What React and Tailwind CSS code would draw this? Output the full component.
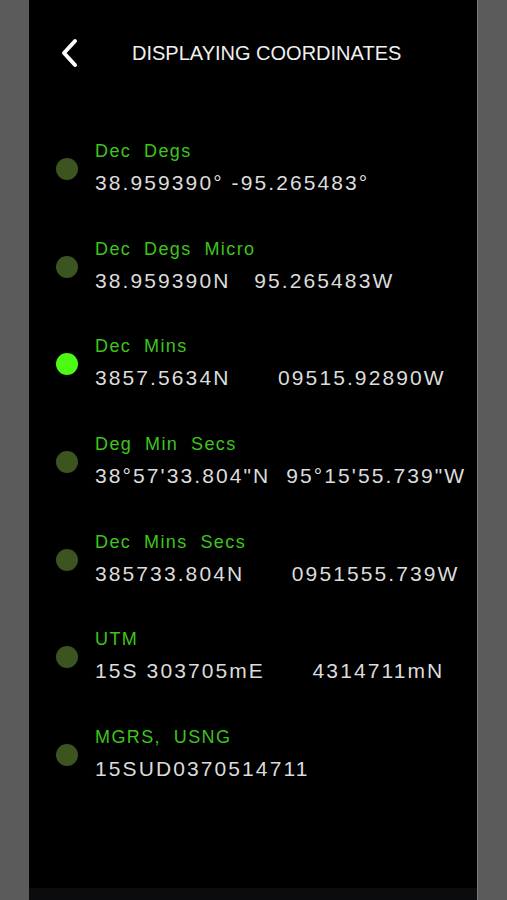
const formats = [
  { label: "Dec  Degs", value: "38.959390° -95.265483°" },
  { label: "Dec  Degs  Micro", value: "38.959390N   95.265483W" },
  { label: "Dec  Mins", value: "3857.5634N      09515.92890W", active: true },
  { label: "Deg  Min  Secs", value: "38°57'33.804\"N  95°15'55.739\"W" },
  { label: "Dec  Mins  Secs", value: "385733.804N      0951555.739W" },
  { label: "UTM", value: "15S 303705mE      4314711mN" },
  { label: "MGRS,  USNG", value: "15SUD0370514711" },
];

export default function App() {
  return (
    <div
      className="flex h-[900px] w-full justify-center bg-[#5b5b5b]"
      style={{ fontFamily: '"Liberation Sans", Arial, sans-serif' }}
    >
      <div className="flex w-[449px] flex-col bg-black border-r border-[#7a7a7a]">
        <div className="flex h-[106px] items-center">
          <svg
            className="ml-[31px] h-[30px] w-[19px]"
            viewBox="0 0 19 30"
            fill="none"
            stroke="white"
            strokeWidth="4"
            strokeLinecap="round"
            strokeLinejoin="round"
          >
            <path d="M15 3 L4 15 L15 27" />
          </svg>
          <h1 className="ml-[53px] text-[20px] leading-none text-[#f0f0f0]">
            DISPLAYING COORDINATES
          </h1>
        </div>

        <ul className="flex flex-1 flex-col gap-[39.67px] pt-[33px]">
          {formats.map((f) => (
            <li key={f.label} className="flex items-center">
              <span
                className={
                  "ml-[27px] mt-[2px] h-[22px] w-[22px] rounded-full " +
                  (f.active ? "bg-[#4cfa14]" : "bg-[#3c5420]")
                }
              />
              <div className="ml-[17px] flex flex-col">
                <span className="whitespace-pre text-[18px] leading-[24px] tracking-[1.4px] text-[#3fc41d]">
                  {f.label}
                </span>
                <span className="mt-[6px] whitespace-pre text-[21px] leading-[28px] tracking-[2.1px] text-[#dcdcdc]">
                  {f.value}
                </span>
              </div>
            </li>
          ))}
        </ul>

        <div className="h-[12px] bg-[#0b0c0d]" />
      </div>
    </div>
  );
}
